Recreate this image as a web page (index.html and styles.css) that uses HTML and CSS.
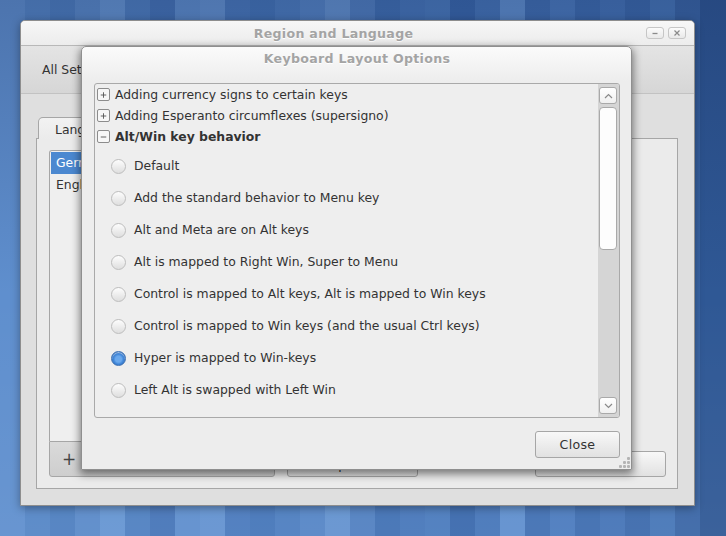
FILE: index.html
```html
<!DOCTYPE html>
<html>
<head>
<meta charset="utf-8">
<link rel="stylesheet" href="styles.css">
</head>
<body>
<div class="desktop">
  <div class="shade"></div>
  <div class="win back">
    <div class="titlebar">
      <span class="title">Region and Language</span>
      <div class="wm">
        <span class="wmb"><svg width="8" height="8" viewBox="0 0 8 8"><path d="M1.5 4.5h5" stroke="#8a8a8a" stroke-width="1.3"/></svg></span>
        <span class="wmb"><svg width="8" height="8" viewBox="0 0 8 8"><path d="M1.5 1.5l5 5M6.5 1.5l-5 5" stroke="#8a8a8a" stroke-width="1.2"/></svg></span>
      </div>
    </div>
    <div class="toolbar"><span>All Settings</span></div>
    <div class="body">
      <div class="tabs">
        <div class="tab">Language</div>
      </div>
      <div class="notebook">
        <div class="list-col">
          <div class="list">
            <div class="item sel">German</div>
            <div class="item">English</div>
          </div>
          <div class="list-tools"><span class="tool">+</span><span class="tool">−</span></div>
        </div>
        <div class="side">
          <div class="side-buttons">
            <span class="btn wide">Options</span>
            <span class="btn wide">Show</span>
          </div>
        </div>
      </div>
    </div>
  </div>

  <div class="win dialog">
    <div class="dlg-title">Keyboard Layout Options</div>
    <div class="frame">
      <div class="tree">
        <div class="node"><span class="exp"><svg width="12" height="12" viewBox="0 0 12 12"><path d="M3 6h6M6 3v6" stroke="#555" stroke-width="1"/></svg></span>Adding currency signs to certain keys</div>
        <div class="node"><span class="exp"><svg width="12" height="12" viewBox="0 0 12 12"><path d="M3 6h6M6 3v6" stroke="#555" stroke-width="1"/></svg></span>Adding Esperanto circumflexes (supersigno)</div>
        <div class="node group"><span class="exp"><svg width="12" height="12" viewBox="0 0 12 12"><path d="M3 6h6" stroke="#555" stroke-width="1"/></svg></span>Alt/Win key behavior</div>
        <div class="options">
          <div class="opt"><span class="radio"></span>Default</div>
          <div class="opt"><span class="radio"></span>Add the standard behavior to Menu key</div>
          <div class="opt"><span class="radio"></span>Alt and Meta are on Alt keys</div>
          <div class="opt"><span class="radio"></span>Alt is mapped to Right Win, Super to Menu</div>
          <div class="opt"><span class="radio"></span>Control is mapped to Alt keys, Alt is mapped to Win keys</div>
          <div class="opt"><span class="radio"></span>Control is mapped to Win keys (and the usual Ctrl keys)</div>
          <div class="opt"><span class="radio on"></span>Hyper is mapped to Win-keys</div>
          <div class="opt"><span class="radio"></span>Left Alt is swapped with Left Win</div>
          <div class="opt last"><span class="radio"></span>Meta is mapped to Left Win</div>
        </div>
      </div>
      <div class="scrollbar">
        <span class="sbtn"><svg width="9" height="6" viewBox="0 0 9 6"><path d="M1 5l3.5-3.5L8 5" fill="none" stroke="#8a8a8a" stroke-width="1.2"/></svg></span>
        <span class="slider"></span>
        <span class="sfill"></span>
        <span class="sbtn"><svg width="9" height="6" viewBox="0 0 9 6"><path d="M1 1l3.5 3.5L8 1" fill="none" stroke="#8a8a8a" stroke-width="1.2"/></svg></span>
      </div>
    </div>
    <div class="dlg-actions">
      <span class="btn close">Close</span>
    </div>
    <svg class="grip" width="11" height="11" viewBox="0 0 11 11">
      <g fill="#b4b4b4">
        <rect x="8" y="0" width="3" height="3" rx="1"/>
        <rect x="4" y="4" width="3" height="3" rx="1"/><rect x="8" y="4" width="3" height="3" rx="1"/>
        <rect x="0" y="8" width="3" height="3" rx="1"/><rect x="4" y="8" width="3" height="3" rx="1"/><rect x="8" y="8" width="3" height="3" rx="1"/>
      </g>
    </svg>
  </div>
</div>
</body>
</html>
```

FILE: styles.css
```css
* { box-sizing: border-box; }
html, body { margin: 0; padding: 0; }
body {
  width: 726px; height: 536px; overflow: hidden;
  font-family: "DejaVu Sans", "Noto Sans", sans-serif;
  font-size: 12.4px;
  color: #333;
}
.desktop {
  position: relative;
  width: 726px; height: 536px;
  background: linear-gradient(to right,
    #5f8fce 0 25px, #5586c6 25px 50px, #4e7fc0 50px 75px, #5a8ac9 75px 100px,
    #6595d2 100px 125px, #4f80c1 125px 150px, #4675b8 150px 175px, #5e8ecd 175px 200px,
    #6392d0 200px 225px, #4a7abd 225px 250px, #4576b9 250px 275px, #4d7ec0 275px 300px,
    #5585c6 300px 325px, #6392cf 325px 350px, #5180c1 350px 375px, #4171b4 375px 400px,
    #4777ba 400px 425px, #4a7bbd 425px 450px, #3a69ad 450px 475px, #4676b9 475px 500px,
    #5f8fce 500px 525px, #4170b3 525px 550px, #4b7bbe 550px 575px, #3e6db0 575px 600px,
    #4574b7 600px 625px, #3c6aac 625px 650px, #4676b7 650px 675px, #3a66a6 675px 700px,
    #2f5895 700px 726px);
}
.shade {
  position: absolute; inset: 0;
  background: linear-gradient(to bottom, rgba(10,20,60,.22), rgba(0,0,0,0) 55%, rgba(255,255,255,.06));
}
.win { position: absolute; }

/* back window */
.back {
  z-index: 1;
  left: 20px; top: 20px; width: 675px; height: 486px;
  display: flex; flex-direction: column;
  background: #dedede;
  border: 1px solid #8e8e8e;
  border-radius: 5px 5px 0 0;
  box-shadow: 0 2px 8px rgba(0,0,0,.35);
}
.titlebar {
  height: 25px; flex: none;
  display: flex; align-items: center;
  padding-right: 8px;
  background: linear-gradient(#f7f7f7, #ececec);
  border-bottom: 1px solid #b8b8b8;
  border-radius: 4px 4px 0 0;
}
.title {
  flex: 1; text-align: center;
  font-weight: bold; font-size: 12.6px;
  color: #a4a4a4; text-shadow: 0 1px #fff;
  letter-spacing: .3px;
}
.wm { display: flex; gap: 4px; }
.wmb {
  width: 18px; height: 12px;
  border: 1px solid #c6c6c6; border-radius: 3px;
  background: linear-gradient(#fbfbfb, #e9e9e9);
  display: flex; align-items: center; justify-content: center;
}
.toolbar {
  height: 48px; flex: none;
  display: flex; align-items: center;
  padding-left: 21px;
  background: linear-gradient(#e4e4e4, #d6d6d6);
  border-bottom: 1px solid #c2c2c2;
}
.body {
  flex: 1;
  display: flex; flex-direction: column;
  padding: 23px 16px 16px 15px;
  background: #dfdfdf;
}
.tabs { display: flex; height: 21px; padding-left: 2px; }
.tab {
  width: 90px; height: 22px;
  padding: 4px 0 0 16px;
  background: linear-gradient(#f2f2f2, #ebebeb);
  border: 1px solid #a6a6a6; border-bottom: none;
  border-radius: 5px 3px 0 0;
  position: relative; z-index: 1;
}
.notebook {
  flex: 1;
  display: flex; gap: 12px;
  padding: 11px 11px 11px 12px;
  background: #ebebeb;
  border: 1px solid #a6a6a6;
}
.list-col { width: 226px; display: flex; flex-direction: column; }
.list {
  flex: 1;
  background: #efefef;
  border: 1px solid #a6a6a6; border-bottom: none;
  border-radius: 3px 3px 0 0;
  padding: 1px;
}
.item { height: 22px; line-height: 22px; padding-left: 5px; }
.item.sel { background: #4b88d0; color: #fff; }
.list-tools {
  height: 36px;
  display: flex; align-items: center;
  padding-left: 6px;
  background: linear-gradient(#dadada, #cecece);
  border: 1px solid #a6a6a6;
  border-radius: 0 0 3px 3px;
}
.tool { width: 26px; text-align: center; font-size: 17px; color: #444; }
.side { flex: 1; display: flex; flex-direction: column; justify-content: flex-end; }
.side-buttons { display: flex; justify-content: space-between; }
.btn {
  display: flex; align-items: center; justify-content: center;
  background: linear-gradient(#f8f8f8, #e1e1e1);
  border: 1px solid #a6a6a6; border-radius: 3px;
  color: #333;
}
.btn.wide { width: 131px; height: 26px; }

/* dialog */
.dialog {
  z-index: 2;
  left: 81px; top: 46px; width: 551px; height: 424px;
  display: flex; flex-direction: column;
  padding: 0 11px 11px 12px;
  background: linear-gradient(#fbfbfb, #ededed 34px);
  border: 1px solid #8f8f8f;
  border-radius: 5px 5px 0 0;
  box-shadow: 0 3px 9px 1px rgba(0,0,0,.5);
}
.dlg-title {
  height: 22px; flex: none;
  display: flex; align-items: center; justify-content: center;
  font-weight: bold; font-size: 12.6px;
  color: #a4a4a4; text-shadow: 0 1px #fff;
  letter-spacing: .3px;
  margin-bottom: 14px;
}
.frame {
  height: 335px; flex: none;
  display: flex;
  background: #eeeeee;
  border: 1px solid #a9a9a9; border-radius: 3px;
  overflow: hidden;
}
.tree { flex: 1; overflow: hidden; padding-left: 2px; }
.node { height: 21px; display: flex; align-items: center; }
.node.group { font-weight: bold; }
.exp {
  width: 13px; height: 13px; flex: none;
  margin-right: 5px;
  border: 1px solid #8c8c8c; border-radius: 2px;
  background: #f7f7f7;
  display: flex; align-items: center; justify-content: center;
}
.exp svg { display: block; }
.options { margin-top: 2px; padding-left: 14px; }
.opt { height: 32px; display: flex; align-items: center; }
.opt.last { align-items: flex-start; padding-top: 11px; }
.opt.last .radio { visibility: hidden; }
.radio {
  width: 15px; height: 15px; flex: none;
  margin-right: 8px; margin-top: 2px;
  border-radius: 50%;
  border: 1px solid #bdbdbd;
  background: linear-gradient(#fdfdfd, #dedede);
}
.radio.on {
  border-color: #3a6fb2;
  background: radial-gradient(circle at 50% 55%, #6aa8ec 0 3px, #3f86d9 5px, #2f6ec0 7px);
  box-shadow: inset 0 1px 1px rgba(255,255,255,.6);
}
.scrollbar {
  width: 21px; flex: none;
  display: flex; flex-direction: column; gap: 3px;
  padding: 3px 2px 3px 1px;
  background: #d5d5d5;
}
.sbtn {
  height: 17px; flex: none;
  display: flex; align-items: center; justify-content: center;
  background: linear-gradient(#ffffff, #f0f0f0);
  border: 1px solid #a9a9a9; border-radius: 3px;
}
.slider {
  height: 143px; flex: none;
  background: #fdfdfd;
  border: 1px solid #a9a9a9; border-radius: 4px;
}
.sfill { flex: 1; }
.dlg-actions { flex: 1; display: flex; justify-content: flex-end; align-items: flex-start; padding-top: 13px; }
.btn.close { width: 85px; height: 27px; font-size: 12.6px; letter-spacing: .3px; }
.grip { position: absolute; right: 1px; bottom: 1px; }
```
